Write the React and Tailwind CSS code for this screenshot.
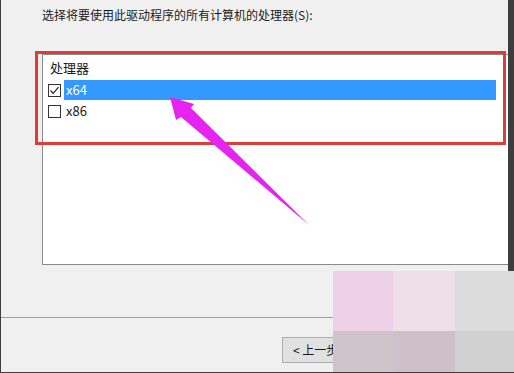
import React from "react";

const font = { fontFamily: '"Noto Sans CJK SC", "Noto Sans", sans-serif' };

function CheckBox({ checked }) {
  return (
    <div className="w-[13px] h-[13px] border border-[#333333] bg-white flex items-center justify-center shrink-0">
      {checked && (
        <svg width="11" height="11" viewBox="0 0 11 11">
          <path d="M1.5 5.5 L4.2 8.3 L9.5 2.2" fill="none" stroke="#222" strokeWidth="1.2" />
        </svg>
      )}
    </div>
  );
}

function Row({ label, checked, selected }) {
  return (
    <div className="h-[20px] flex items-center pl-[5px]">
      <CheckBox checked={checked} />
      <div
        className={
          "ml-[3px] h-[20px] w-[432px] flex items-center pl-[2px] text-[13px] " +
          (selected ? "bg-[#3399ff] text-white" : "text-[#1a1a1a]")
        }
      >
        {label}
      </div>
    </div>
  );
}

const tiles = ["bg-[#efd0e9]", "bg-[#efdfe8]", "bg-[#dcdcdc]", "bg-[#cfc4ca]", "bg-[#cec0c9]", "bg-[#d1d1d1]"];

export default function App() {
  return (
    <div
      className="relative w-[514px] h-[373px] overflow-hidden bg-[#f0f0f0] border-l border-b border-[#3f3f3f] flex"
      style={font}
    >
      <div className="w-[507px] flex flex-col">
        <div className="h-[54px] pl-[41px] pt-[7px] text-[12px] leading-[16px] text-[#1a1a1a]">
          选择将要使用此驱动程序的所有计算机的处理器(S):
        </div>
        <div className="ml-[41px] h-[211px] bg-white border border-r-0 border-[#8a8a8a] flex flex-col">
          <div className="h-[25px] flex items-center pl-[7px] text-[13px] text-[#1a1a1a]">处理器</div>
          <Row label="x64" checked selected />
          <div className="h-[1px]" />
          <Row label="x86" />
        </div>
        <div className="h-[52px]" />
        <div className="h-[1px] bg-[#a0a0a0]" />
        <div className="h-[19px]" />
        <div className="h-[26px] pl-[281px] flex">
          <div className="w-[80px] h-[26px] border border-[#adadad] bg-[#e1e1e1] flex items-center pl-[10px] text-[12px] text-[#1a1a1a]">
            &lt; 上一步(B)
          </div>
        </div>
      </div>
      <div className="flex-1 bg-[#3d3d3d]" />

      <div className="absolute left-[34px] top-[51px] w-[471px] h-[94px] border-[3px] border-[#dc3c3c]" />

      <svg className="absolute left-0 top-0 pointer-events-none" width="514" height="373">
        <polygon
          points="169,97 193,104 190,108 308,225 180,117 175,120"
          fill="#e524f2"
        />
      </svg>

      <div className="absolute left-[332px] top-[271px] w-[182px] h-[101px] grid grid-cols-[60px_62px_60px] grid-rows-[60px_41px]">
        {tiles.map((c, i) => (
          <div key={i} className={c} />
        ))}
      </div>
    </div>
  );
}
